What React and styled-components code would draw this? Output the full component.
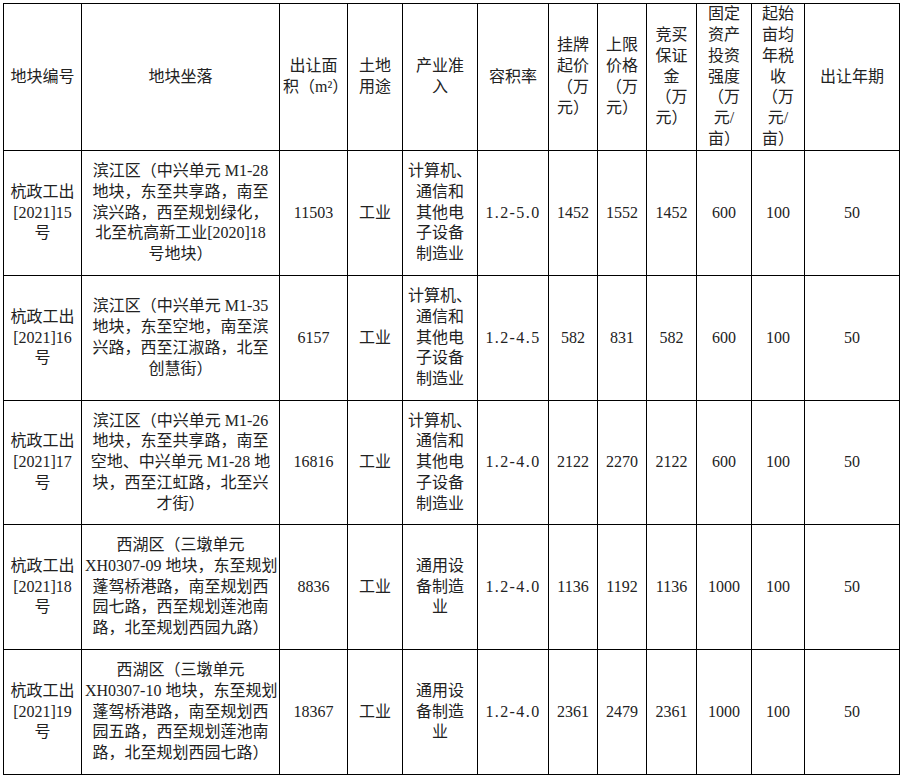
import React from 'react'
import styled, { createGlobalStyle } from 'styled-components'

const GlobalStyle = createGlobalStyle`
    body {
        margin: 0;
        background: #fff;
    }
`;

// column widths measured between the border lines
const colWidths = [78, 198, 68, 55, 75, 71, 49, 49, 50, 55, 53, 95]

const header = [
    ['地块编号'],
    ['地块坐落'],
    ['出让面', '积（m²）'],
    ['土地', '用途'],
    ['产业准', '入'],
    ['容积率'],
    ['挂牌', '起价', '（万', '元）'],
    ['上限', '价格', '（万', '元）'],
    ['竞买', '保证', '金', '（万', '元）'],
    ['固定', '资产', '投资', '强度', '（万', '元/', '亩）'],
    ['起始', '亩均', '年税', '收', '（万', '元/', '亩）'],
    ['出让年期'],
]

const computerIndustry = ['计算机、', '通信和', '其他电', '子设备', '制造业']
const generalIndustry = ['通用设', '备制造', '业']

const rows = [
    {
        code: ['杭政工出', '[2021]15', '号'],
        place: ['滨江区（中兴单元 M1-28', '地块，东至共享路，南至', '滨兴路，西至规划绿化，', '北至杭高新工业[2020]18', '号地块）'],
        area: '11503', industry: computerIndustry, ratio: '1.2-5.0',
        nums: ['1452', '1552', '1452', '600', '100', '50'],
        height: 125,
    },
    {
        code: ['杭政工出', '[2021]16', '号'],
        place: ['滨江区（中兴单元 M1-35', '地块，东至空地，南至滨', '兴路，西至江淑路，北至', '创慧街）'],
        area: '6157', industry: computerIndustry, ratio: '1.2-4.5',
        nums: ['582', '831', '582', '600', '100', '50'],
        height: 125,
    },
    {
        code: ['杭政工出', '[2021]17', '号'],
        place: ['滨江区（中兴单元 M1-26', '地块，东至共享路，南至', '空地、中兴单元 M1-28 地', '块，西至江虹路，北至兴', '才街）'],
        area: '16816', industry: computerIndustry, ratio: '1.2-4.0',
        nums: ['2122', '2270', '2122', '600', '100', '50'],
        height: 124,
    },
    {
        code: ['杭政工出', '[2021]18', '号'],
        place: ['西湖区（三墩单元', 'XH0307-09 地块，东至规划', '蓬驾桥港路，南至规划西', '园七路，西至规划莲池南', '路，北至规划西园九路）'],
        area: '8836', industry: generalIndustry, ratio: '1.2-4.0',
        nums: ['1136', '1192', '1136', '1000', '100', '50'],
        height: 125,
    },
    {
        code: ['杭政工出', '[2021]19', '号'],
        place: ['西湖区（三墩单元', 'XH0307-10 地块，东至规划', '蓬驾桥港路，南至规划西', '园五路，西至规划莲池南', '路，北至规划西园七路）'],
        area: '18367', industry: generalIndustry, ratio: '1.2-4.0',
        nums: ['2361', '2479', '2361', '1000', '100', '50'],
        height: 125,
    },
]

function Lines({ lines }) {
    return lines.map((line, i) => (
        <React.Fragment key={i}>
            {i > 0 && <br />}
            {line}
        </React.Fragment>
    ))
}

function App() {
    return (
        <Page>
            <GlobalStyle />
            <LandTable>
                <colgroup>
                    {colWidths.map((w, i) => <col key={i} style={{ width: w }} />)}
                </colgroup>
                <thead>
                    <Row $h={147}>
                        {header.map((lines, i) => (
                            <HeadCell key={i}><Lines lines={lines} /></HeadCell>
                        ))}
                    </Row>
                </thead>
                <tbody>
                    {rows.map((r) => (
                        <Row key={r.code[1]} $h={r.height}>
                            <Cell><Lines lines={r.code} /></Cell>
                            <Cell><Lines lines={r.place} /></Cell>
                            <Cell>{r.area}</Cell>
                            <Cell>工业</Cell>
                            <Cell><Lines lines={r.industry} /></Cell>
                            <Cell><Ratio>{r.ratio}</Ratio></Cell>
                            {r.nums.map((n, i) => <Cell key={i}>{n}</Cell>)}
                        </Row>
                    ))}
                </tbody>
            </LandTable>
        </Page>
    )
}

const Page = styled.div`
    padding: 3px;
    background: #fff;
`;

const LandTable = styled.table`
    width: 897px;
    table-layout: fixed;
    border-collapse: collapse;
    font-family: "Liberation Serif", "Noto Sans CJK SC", serif;
    font-size: 16px;
    line-height: 20.8px;
    color: #222;
`;

const Row = styled.tr`
    height: ${p => p.$h}px;
`;

const Cell = styled.td`
    border: 1px solid #000;
    padding: 0 3px;
    text-align: center;
    vertical-align: middle;
    white-space: nowrap;
    overflow: hidden;
`;

const HeadCell = styled(Cell).attrs({ as: 'th' })`
    font-weight: normal;
`;

const Ratio = styled.span`
    letter-spacing: 1.4px;
`;

export default App
